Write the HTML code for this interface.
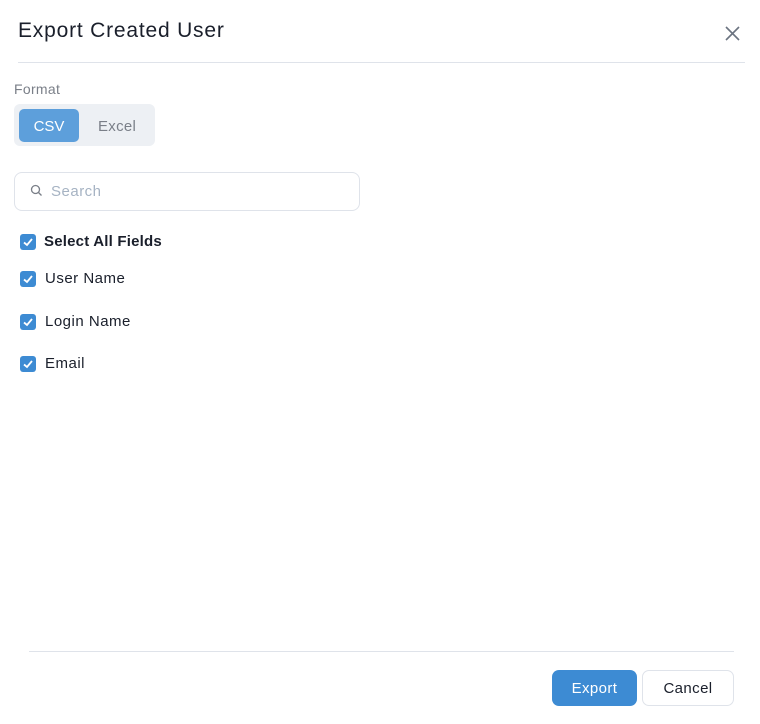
<!DOCTYPE html>
<html><head><style>
body{margin:0;width:760px;height:724px;background:#fff;font-family:"Liberation Sans",sans-serif;position:relative;overflow:hidden;color:#1a1f2b}
.a{position:absolute}
.cb{position:absolute;left:20px;width:16px;height:16px;background:#3d8bd3;border-radius:3px}
.cb svg{position:absolute;left:2px;top:2px}
.lbl{position:absolute;left:45px;font-size:15px;letter-spacing:0.5px}
</style></head><body>
<div class="a" style="left:18px;top:19px;font-size:21px;letter-spacing:0.8px;color:#1a1f2b">Export Created User</div>
<svg class="a" style="left:724px;top:25px" width="17" height="17"><path d="M2 2L15 15M15 2L2 15" stroke="#6b7380" stroke-width="1.6"/></svg>
<div class="a" style="left:18px;top:62px;width:727px;height:1px;background:#dfe3ea"></div>
<div class="a" style="left:14px;top:81px;font-size:14px;letter-spacing:0.3px;color:#7a7f88">Format</div>
<div class="a" style="left:14px;top:104px;width:141px;height:42px;background:#edf0f4;border-radius:6px"></div>
<div class="a" style="left:19px;top:109px;width:60px;height:33px;background:#5d9fdb;border-radius:5px;color:#fff;font-size:15px;text-align:center;line-height:35px">CSV</div>
<div class="a" style="left:98px;top:118px;font-size:15px;letter-spacing:0.3px;color:#7a7f88">Excel</div>
<div class="a" style="left:14px;top:172px;width:344px;height:37px;border:1px solid #dfe3ea;border-radius:8px"></div>
<svg class="a" style="left:30px;top:184px" width="13" height="13"><circle cx="5.5" cy="5.5" r="4" stroke="#7a7f88" stroke-width="1.3" fill="none"/><path d="M8.5 8.5L11.5 11.5" stroke="#7a7f88" stroke-width="1.3"/></svg>
<div class="a" style="left:51px;top:183px;font-size:15px;letter-spacing:0.5px;color:#a6b3c3">Search</div>
<div class="cb" style="top:234px"><svg width="12" height="12"><path d="M2 6.5L5 9L10 3" stroke="#fff" stroke-width="1.8" fill="none"/></svg></div>
<div class="lbl" style="top:233px;font-weight:bold;left:44px;letter-spacing:0.2px">Select All Fields</div>
<div class="cb" style="top:271px"><svg width="12" height="12"><path d="M2 6.5L5 9L10 3" stroke="#fff" stroke-width="1.8" fill="none"/></svg></div>
<div class="lbl" style="top:270px">User Name</div>
<div class="cb" style="top:314px"><svg width="12" height="12"><path d="M2 6.5L5 9L10 3" stroke="#fff" stroke-width="1.8" fill="none"/></svg></div>
<div class="lbl" style="top:313px">Login Name</div>
<div class="cb" style="top:356px"><svg width="12" height="12"><path d="M2 6.5L5 9L10 3" stroke="#fff" stroke-width="1.8" fill="none"/></svg></div>
<div class="lbl" style="top:355px">Email</div>
<div class="a" style="left:29px;top:651px;width:705px;height:1px;background:#dfe3ea"></div>
<div class="a" style="left:552px;top:670px;width:85px;height:36px;background:#3d8bd3;border-radius:7px;color:#fff;font-size:15px;letter-spacing:0.4px;text-align:center;line-height:38px">Export</div>
<div class="a" style="left:642px;top:670px;width:90px;height:34px;border:1px solid #dfe3ea;border-radius:7px;font-size:15px;letter-spacing:0.4px;text-align:center;line-height:36px">Cancel</div>
</body></html>
